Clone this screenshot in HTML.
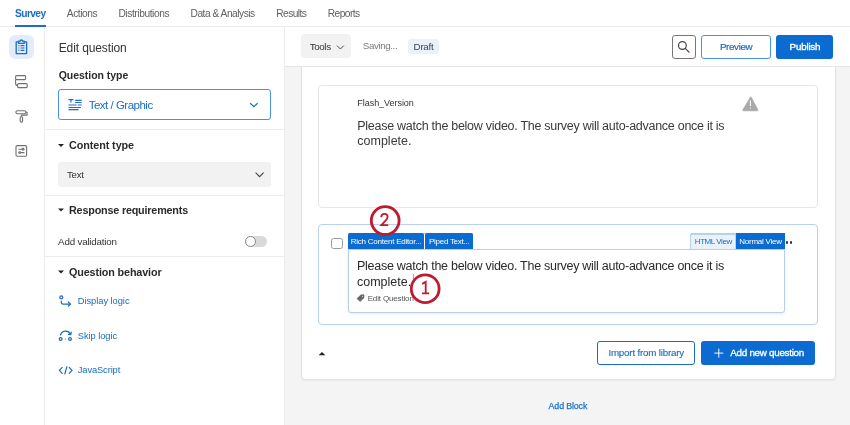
<!DOCTYPE html>
<html><head><meta charset="utf-8"><style>
html,body{margin:0;padding:0;width:850px;height:425px;overflow:hidden;background:#fff;}
body{position:relative;font-family:"Liberation Sans", sans-serif;}
.t{position:absolute;white-space:nowrap;}
.a{position:absolute;box-sizing:border-box;}
svg{position:absolute;overflow:visible;}
</style></head><body><div id="root" style="position:absolute;left:0;top:0;width:850px;height:425px;will-change:transform;background:#fff">
<!-- nav -->
<div class="a" style="left:0;top:26px;width:850px;height:1px;background:#ebebeb"></div>
<div class="a" style="left:15px;top:25px;width:31px;height:2px;background:#1a6cc4"></div>
<!-- rail -->
<div class="a" style="left:44px;top:27px;width:1px;height:398px;background:#ebebeb"></div>
<div class="a" style="left:9px;top:35px;width:25px;height:24px;background:#e3ecf8;border-radius:6px"></div>
<!-- clipboard icon -->
<svg style="left:0;top:0" width="850" height="425" viewBox="0 0 850 425">
  <g fill="none" stroke="#1a6cc4" stroke-width="1.3" stroke-linejoin="round">
    <path d="M18.2 41.8 H16.2 V53.6 H26.6 V41.8 H24.6"/>
    <path d="M18.6 43.4 V41.2 H20.2 A1.2 1.2 0 0 1 22.6 41.2 H24.2 V43.4 Z"/>
  </g>
  <g stroke="#1a6cc4" stroke-width="1.2">
    <path d="M18.4 45.6 H19.4 M20.6 45.6 H24.4 M18.4 48 H19.4 M20.6 48 H24.4 M18.4 50.4 H19.4 M20.6 50.4 H24.4"/>
  </g>
  <!-- blocks icon -->
  <g fill="none" stroke="#707070" stroke-width="1.1" stroke-linejoin="round">
    <rect x="15.6" y="75.6" width="10" height="4" rx="1"/>
    <rect x="17.6" y="83.6" width="9.6" height="4" rx="1"/>
    <path d="M15.6 79.6 V83.6 Q15.6 85.6 17.6 85.6"/>
  </g>
  <!-- paint roller -->
  <g fill="none" stroke="#707070" stroke-width="1.1" stroke-linejoin="round">
    <rect x="15.9" y="110.7" width="10" height="3" rx="1.4"/>
    <path d="M25.9 112.2 H27.1 V115.1 H21.4 V116.7"/>
    <rect x="20.2" y="116.7" width="2.4" height="5.4" rx="1.2"/>
  </g>
  <!-- sliders box -->
  <g fill="none" stroke="#707070" stroke-width="1.1">
    <rect x="16" y="145.6" width="10.6" height="10.6" rx="1.2"/>
    <path d="M18.4 149.3 H22.2 M23.8 149.3 H24.4 M18.4 152.6 H19 M20.6 152.6 H24.4"/>
    <circle cx="23" cy="149.3" r="0.9"/>
    <circle cx="19.8" cy="152.6" r="0.9"/>
  </g>
</svg>
<!-- left panel -->
<div class="a" style="left:284px;top:27px;width:1px;height:398px;background:#ebebeb"></div>
<div class="a" style="left:58px;top:89px;width:213px;height:31px;border:1.3px solid #4a90dc;border-radius:3px"></div>
<div class="a" style="left:45px;top:129px;width:239px;height:1px;background:#ececec"></div>
<div class="a" style="left:58px;top:162px;width:213px;height:25px;background:#f2f2f2;border-radius:3px"></div>
<div class="a" style="left:45px;top:195px;width:239px;height:1px;background:#ececec"></div>
<div class="a" style="left:45px;top:256px;width:239px;height:1px;background:#ececec"></div>
<!-- toggle -->
<div class="a" style="left:245px;top:236px;width:22px;height:11px;background:#d9d9d9;border-radius:6px"></div>
<div class="a" style="left:245px;top:236px;width:11px;height:11px;background:#fff;border:1px solid #8a8a8a;border-radius:50%"></div>
<svg style="left:0;top:0" width="850" height="425" viewBox="0 0 850 425">
  <!-- text/graphic icon -->
  <g stroke="#1a6cc4" stroke-width="1.1">
    <path d="M68.5 99.6 H73.4 M71 99.6 V102.6 M75.2 100.4 H81.7 M75.2 102.5 H81.7 M68.5 105 H76.6 M77.8 105 H81.7 M68.5 107.5 H80.9 M68.5 109.6 H78.6"/>
  </g>
  <!-- dropdown chevron -->
  <path d="M250.2 103.2 L253.9 106.6 L257.6 103.2" fill="none" stroke="#1a6cc4" stroke-width="1.2"/>
  <!-- select chevron -->
  <path d="M255.6 172.6 L259.6 176.6 L263.6 172.6" fill="none" stroke="#444" stroke-width="1.1"/>
  <!-- triangles -->
  <path d="M58 144 H64 L61 147 Z" fill="#222"/>
  <path d="M58 208.6 H64 L61 211.6 Z" fill="#222"/>
  <path d="M58 270.6 H64 L61 273.6 Z" fill="#222"/>
  <!-- display logic icon -->
  <g fill="none" stroke="#1a6cc4" stroke-width="1.2" stroke-linecap="round" stroke-linejoin="round">
    <circle cx="61.3" cy="297.4" r="1.5"/>
    <path d="M61.3 301.2 V302.6 Q61.3 304.1 62.8 304.1 H70.4"/>
    <path d="M68.3 302 L70.5 304.1 L68.3 306.2"/>
  </g>
  <!-- skip logic icon -->
  <g fill="none" stroke="#1a6cc4" stroke-width="1.2" stroke-linecap="round" stroke-linejoin="round">
    <path d="M60.4 335 Q62 331.2 65.6 331.2 Q69 331.2 70.6 334.2"/>
    <path d="M68.4 334.4 L70.8 334.6 L71.2 332.2"/>
    <circle cx="60.6" cy="339" r="1.4"/>
    <circle cx="70" cy="339" r="1.4"/>
  </g>
  <circle cx="65.4" cy="339" r="0.6" fill="#1a6cc4"/>
  <!-- js icon -->
  <g fill="none" stroke="#1a6cc4" stroke-width="1.2" stroke-linecap="round" stroke-linejoin="round">
    <path d="M62.2 367.4 L59.4 370.4 L62.2 373.4"/>
    <path d="M66.8 366.8 L64.8 374"/>
    <path d="M69.2 367.4 L72 370.4 L69.2 373.4"/>
  </g>
</svg>
<!-- main -->
<div class="a" style="left:285px;top:27px;width:565px;height:398px;background:#f4f4f4"></div>
<!-- canvas -->
<div class="a" style="left:301px;top:40px;width:535px;height:340px;background:#fff;border:1px solid #e2e2e2;border-radius:4px;box-shadow:0 1px 1px rgba(0,0,0,0.04)"></div>
<!-- toolbar -->
<div class="a" style="left:285px;top:27px;width:565px;height:40px;background:#fff;border-bottom:1px solid #e6e6e6"></div>
<div class="a" style="left:301px;top:34px;width:50px;height:24px;background:#f2f2f2;border-radius:4px"></div>
<div class="a" style="left:408px;top:39px;width:31px;height:15px;background:#eaf1fa;border-radius:3px"></div>
<div class="a" style="left:672px;top:35px;width:24px;height:24px;border:1px solid #777;border-radius:3px"></div>
<div class="a" style="left:701px;top:35px;width:70px;height:24px;border:1px solid #4a90dc;border-radius:3px"></div>
<div class="a" style="left:776px;top:35px;width:57px;height:24px;background:#0b6bd0;border-radius:3px"></div>
<svg style="left:0;top:0" width="850" height="425" viewBox="0 0 850 425">
  <path d="M337 45.6 L340.4 49 L343.8 45.6" fill="none" stroke="#444" stroke-width="0.95"/>
  <g fill="none" stroke="#444" stroke-width="1.2">
    <circle cx="682.4" cy="45.5" r="3.9"/>
    <path d="M685.3 48.4 L689 52.2" stroke-linecap="round"/>
  </g>
</svg>
<!-- card 1 -->
<div class="a" style="left:318px;top:85px;width:500px;height:123px;border:1px solid #e6e6e6;border-radius:4px"></div>
<svg style="left:0;top:0" width="850" height="425" viewBox="0 0 850 425">
  <path d="M750.4 97.2 Q750.4 96.4 751 97 L758 110 Q758.2 110.8 757.4 110.8 H743.4 Q742.6 110.8 742.8 110 Z" fill="#a9a9a9" stroke="#a9a9a9" stroke-width="0.8" stroke-linejoin="round"/>
  <path d="M750.4 100.6 V106" stroke="#fff" stroke-width="1.1"/>
  <circle cx="750.4" cy="108" r="0.6" fill="#fff"/>
</svg>
<!-- card 2 -->
<div class="a" style="left:318px;top:224px;width:500px;height:101px;border:1px solid #b6d0ee;border-radius:4px"></div>
<div class="a" style="left:331px;top:238px;width:12px;height:11px;border:1px solid #9a9a9a;border-radius:2.5px"></div>
<div class="a" style="left:347.5px;top:233px;width:437.5px;height:79.5px;border:1px solid #b6cfeb;border-radius:0 0 3px 3px;box-shadow:0 1px 3px rgba(0,0,0,0.08);background:#fff"></div>
<div class="a" style="left:347.5px;top:233px;width:76.5px;height:16.5px;background:#0b6bd0;border-radius:2px 2px 0 0"></div>
<div class="a" style="left:425px;top:233px;width:47.6px;height:16.5px;background:#0b6bd0;border-radius:2px 2px 0 0"></div>
<div class="a" style="left:472.6px;top:233px;width:218px;height:16px;background:#fff"></div>
<div class="a" style="left:690.4px;top:233.6px;width:45.4px;height:16px;background:#e9f1fb;border:1px solid #b9d3ef;border-bottom:none"></div>
<div class="a" style="left:735.8px;top:233px;width:49.2px;height:16.5px;background:#0b6bd0"></div>
<div class="a" style="left:347.5px;top:249px;width:437.5px;height:1px;background:#b6cfeb"></div>
<div class="a" style="left:785.6px;top:241.4px;width:2.2px;height:2.2px;background:#333;border-radius:50%"></div>
<div class="a" style="left:789.6px;top:241.4px;width:2.2px;height:2.2px;background:#333;border-radius:50%"></div>
<div class="a" style="left:412.6px;top:273.5px;width:1px;height:6px;background:#aaa"></div>
<svg style="left:0;top:0" width="850" height="425" viewBox="0 0 850 425">
  <path d="M357 298.6 L361 294.8 H364 V297.8 L360 301.6 Z" fill="#666" stroke="#666" stroke-width="0.6" stroke-linejoin="round"/>
  <circle cx="362.6" cy="296.2" r="0.55" fill="#fff"/>
  <path d="M318.6 355.2 L322 352 L325.4 355.2 Z" fill="#222"/>
</svg>
<!-- bottom buttons -->
<div class="a" style="left:597px;top:341px;width:98px;height:24px;border:1px solid #1a6cc4;border-radius:3px"></div>
<div class="a" style="left:701px;top:341px;width:114px;height:24px;background:#0b6bd0;border-radius:3px"></div>
<svg style="left:0;top:0" width="850" height="425" viewBox="0 0 850 425">
  <path d="M718.8 348.6 V357.6 M714.3 353.1 H723.3" stroke="#fff" stroke-width="0.95"/>
</svg>

<div class="t" style="left:15.10px;top:9.37px;font-size:10.2px;line-height:10.2px;font-weight:700;color:#1a6cc4;letter-spacing:-0.597px;">Survey</div><div class="t" style="left:66.80px;top:9.37px;font-size:10.2px;line-height:10.2px;font-weight:400;color:#606060;letter-spacing:-0.446px;">Actions</div><div class="t" style="left:118.40px;top:9.37px;font-size:10.2px;line-height:10.2px;font-weight:400;color:#606060;letter-spacing:-0.405px;">Distributions</div><div class="t" style="left:190.50px;top:9.37px;font-size:10.2px;line-height:10.2px;font-weight:400;color:#606060;letter-spacing:-0.477px;">Data &amp; Analysis</div><div class="t" style="left:276.30px;top:9.37px;font-size:10.2px;line-height:10.2px;font-weight:400;color:#606060;letter-spacing:-0.583px;">Results</div><div class="t" style="left:327.80px;top:9.37px;font-size:10.2px;line-height:10.2px;font-weight:400;color:#606060;letter-spacing:-0.567px;">Reports</div><div class="t" style="left:58.70px;top:42.04px;font-size:12px;line-height:12px;font-weight:400;color:#333;letter-spacing:-0.107px;">Edit question</div><div class="t" style="left:58.70px;top:69.81px;font-size:10.5px;line-height:10.5px;font-weight:700;color:#2b2b2b;letter-spacing:-0.032px;">Question type</div><div class="t" style="left:88.70px;top:99.67px;font-size:11.5px;line-height:11.5px;font-weight:400;color:#1a6cc4;letter-spacing:-0.497px;">Text / Graphic</div><div class="t" style="left:69.00px;top:140.26px;font-size:10.8px;line-height:10.8px;font-weight:700;color:#2b2b2b;letter-spacing:-0.082px;">Content type</div><div class="t" style="left:67.00px;top:169.67px;font-size:9.6px;line-height:9.6px;font-weight:400;color:#333;letter-spacing:-0.202px;">Text</div><div class="t" style="left:69.00px;top:204.86px;font-size:10.8px;line-height:10.8px;font-weight:700;color:#2b2b2b;letter-spacing:-0.191px;">Response requirements</div><div class="t" style="left:58.10px;top:237.30px;font-size:9.8px;line-height:9.8px;font-weight:400;color:#333;letter-spacing:-0.203px;">Add validation</div><div class="t" style="left:69.00px;top:267.06px;font-size:10.8px;line-height:10.8px;font-weight:700;color:#2b2b2b;letter-spacing:-0.135px;">Question behavior</div><div class="t" style="left:77.80px;top:296.24px;font-size:9.4px;line-height:9.4px;font-weight:400;color:#1a6cc4;letter-spacing:-0.071px;">Display logic</div><div class="t" style="left:77.80px;top:331.04px;font-size:9.4px;line-height:9.4px;font-weight:400;color:#1a6cc4;letter-spacing:-0.092px;">Skip logic</div><div class="t" style="left:77.80px;top:365.24px;font-size:9.4px;line-height:9.4px;font-weight:400;color:#1a6cc4;letter-spacing:-0.148px;">JavaScript</div><div class="t" style="left:309.70px;top:41.70px;font-size:9.8px;line-height:9.8px;font-weight:400;color:#333;letter-spacing:-0.375px;">Tools</div><div class="t" style="left:362.80px;top:41.00px;font-size:9.8px;line-height:9.8px;font-weight:400;color:#7c7c7c;letter-spacing:-0.414px;">Saving...</div><div class="t" style="left:413.60px;top:41.70px;font-size:9.8px;line-height:9.8px;font-weight:400;color:#444;letter-spacing:-0.287px;">Draft</div><div class="t" style="left:719.90px;top:41.60px;font-size:9.8px;line-height:9.8px;font-weight:400;color:#1a6cc4;letter-spacing:-0.351px;-webkit-text-stroke:0.2px #1a6cc4">Preview</div><div class="t" style="left:789.60px;top:42.00px;font-size:9.8px;line-height:9.8px;font-weight:400;color:#fff;letter-spacing:-0.206px;-webkit-text-stroke:0.35px #fff">Publish</div><div class="t" style="left:357.30px;top:99.38px;font-size:9px;line-height:9px;font-weight:400;color:#333;letter-spacing:-0.042px;">Flash_Version</div><div class="t" style="left:357.30px;top:119.52px;font-size:12.5px;line-height:12.5px;font-weight:400;color:#3a3a3a;letter-spacing:-0.277px;">Please watch the below video. The survey will auto-advance once it is</div><div class="t" style="left:357.30px;top:135.02px;font-size:12.5px;line-height:12.5px;font-weight:400;color:#3a3a3a;letter-spacing:0.000px;">complete.</div><div class="t" style="left:350.70px;top:238.23px;font-size:8px;line-height:8px;font-weight:400;color:#fff;letter-spacing:-0.232px;">Rich Content Editor...</div><div class="t" style="left:429.00px;top:238.23px;font-size:8px;line-height:8px;font-weight:400;color:#fff;letter-spacing:-0.276px;">Piped Text...</div><div class="t" style="left:694.80px;top:238.23px;font-size:8px;line-height:8px;font-weight:400;color:#1a6cc4;letter-spacing:-0.434px;">HTML View</div><div class="t" style="left:739.30px;top:238.23px;font-size:8px;line-height:8px;font-weight:400;color:#fff;letter-spacing:-0.246px;">Normal View</div><div class="t" style="left:357.00px;top:260.32px;font-size:12.5px;line-height:12.5px;font-weight:400;color:#2a2a2a;letter-spacing:-0.277px;">Please watch the below video. The survey will auto-advance once it is</div><div class="t" style="left:357.00px;top:276.22px;font-size:12.5px;line-height:12.5px;font-weight:400;color:#2a2a2a;letter-spacing:0.000px;">complete.</div><div class="t" style="left:367.70px;top:295.03px;font-size:8px;line-height:8px;font-weight:400;color:#555;letter-spacing:-0.156px;">Edit Question</div><div class="t" style="left:608.40px;top:347.90px;font-size:9.8px;line-height:9.8px;font-weight:400;color:#1a6cc4;letter-spacing:-0.204px;-webkit-text-stroke:0.12px #1a6cc4">Import from library</div><div class="t" style="left:730.30px;top:347.90px;font-size:9.8px;line-height:9.8px;font-weight:400;color:#fff;letter-spacing:-0.262px;-webkit-text-stroke:0.3px #fff">Add new question</div><div class="t" style="left:548.60px;top:402.35px;font-size:8.8px;line-height:8.8px;font-weight:400;color:#1a73c8;letter-spacing:-0.112px;-webkit-text-stroke:0.25px #1a73c8">Add Block</div>
<svg style="left:0;top:0" width="850" height="425" viewBox="0 0 850 425">
  <g fill="none" stroke="#c01a2f" stroke-width="2.8">
    <circle cx="385.2" cy="220.6" r="13.9"/>
    <circle cx="425.2" cy="288.7" r="13.9"/>
  </g>
  <g fill="none" stroke="#c01a2f" stroke-width="1.8" stroke-linejoin="miter">
    <path d="M381.2 217.2 Q381.4 213.9 384.4 213.9 Q387.6 213.9 387.6 216.8 Q387.6 218.6 385.6 220.6 L381.3 225.1 H388.2"/>
    <path d="M422.2 283.9 L425.7 281.9 V293.3 M421.9 293.3 H429.2"/>
  </g>
</svg>

</div></body></html>
